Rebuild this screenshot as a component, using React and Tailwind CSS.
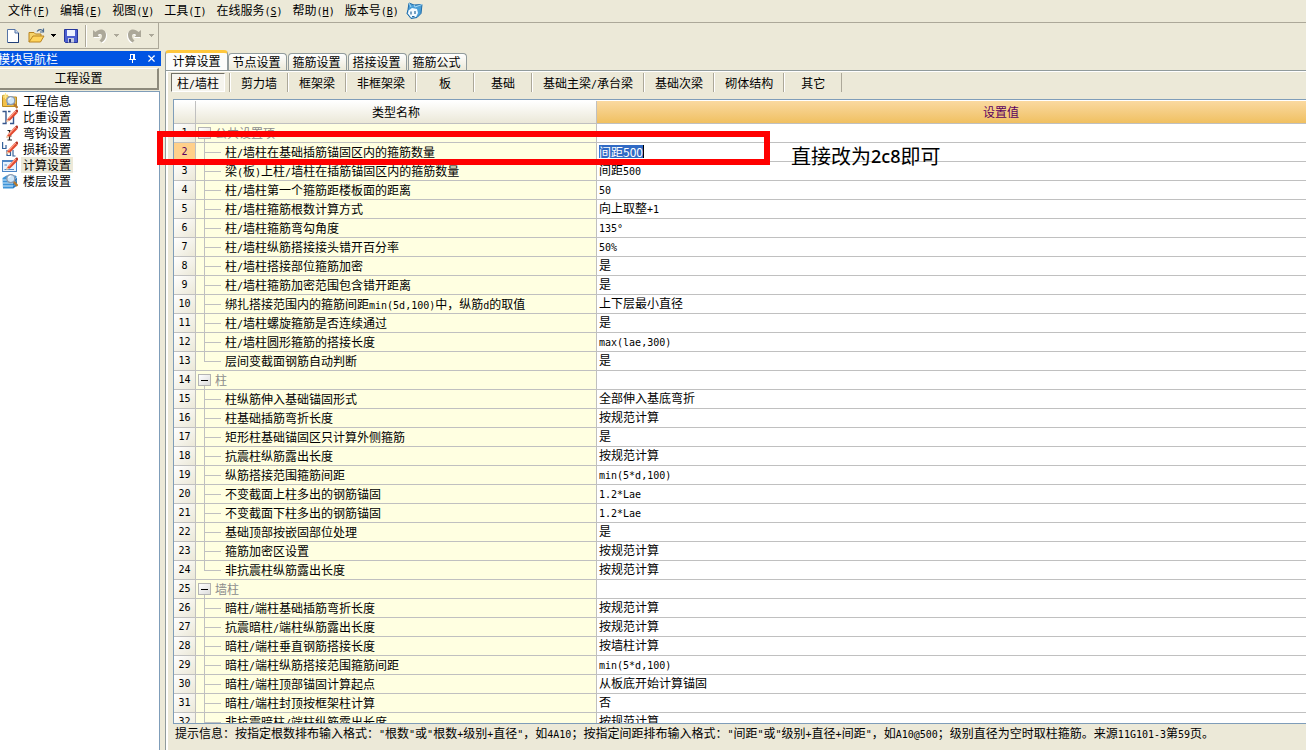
import React from 'react';
import { X } from 'lucide-react';

const menus = [
  { text: '文件', hot: 'F' },
  { text: '编辑', hot: 'E' },
  { text: '视图', hot: 'V' },
  { text: '工具', hot: 'T' },
  { text: '在线服务', hot: 'S' },
  { text: '帮助', hot: 'H' },
  { text: '版本号', hot: 'B' },
];

const tabs = ['计算设置', '节点设置', '箍筋设置', '搭接设置', '箍筋公式'];

const members = ['柱/墙柱', '剪力墙', '框架梁', '非框架梁', '板', '基础', '基础主梁/承台梁', '基础次梁', '砌体结构', '其它'];

const rows = [
  { group: '公共设置项' },
  { label: '柱/墙柱在基础插筋锚固区内的箍筋数量', value: '间距500', editing: true },
  { label: '梁(板)上柱/墙柱在插筋锚固区内的箍筋数量', value: '间距500' },
  { label: '柱/墙柱第一个箍筋距楼板面的距离', value: '50' },
  { label: '柱/墙柱箍筋根数计算方式', value: '向上取整+1' },
  { label: '柱/墙柱箍筋弯勾角度', value: '135°' },
  { label: '柱/墙柱纵筋搭接接头错开百分率', value: '50%' },
  { label: '柱/墙柱搭接部位箍筋加密', value: '是' },
  { label: '柱/墙柱箍筋加密范围包含错开距离', value: '是' },
  { label: '绑扎搭接范围内的箍筋间距min(5d,100)中，纵筋d的取值', value: '上下层最小直径' },
  { label: '柱/墙柱螺旋箍筋是否连续通过', value: '是' },
  { label: '柱/墙柱圆形箍筋的搭接长度', value: 'max(lae,300)' },
  { label: '层间变截面钢筋自动判断', value: '是' },
  { group: '柱' },
  { label: '柱纵筋伸入基础锚固形式', value: '全部伸入基底弯折' },
  { label: '柱基础插筋弯折长度', value: '按规范计算' },
  { label: '矩形柱基础锚固区只计算外侧箍筋', value: '是' },
  { label: '抗震柱纵筋露出长度', value: '按规范计算' },
  { label: '纵筋搭接范围箍筋间距', value: 'min(5*d,100)' },
  { label: '不变截面上柱多出的钢筋锚固', value: '1.2*Lae' },
  { label: '不变截面下柱多出的钢筋锚固', value: '1.2*Lae' },
  { label: '基础顶部按嵌固部位处理', value: '是' },
  { label: '箍筋加密区设置', value: '按规范计算' },
  { label: '非抗震柱纵筋露出长度', value: '按规范计算' },
  { group: '墙柱' },
  { label: '暗柱/端柱基础插筋弯折长度', value: '按规范计算' },
  { label: '抗震暗柱/端柱纵筋露出长度', value: '按规范计算' },
  { label: '暗柱/端柱垂直钢筋搭接长度', value: '按墙柱计算' },
  { label: '暗柱/端柱纵筋搭接范围箍筋间距', value: 'min(5*d,100)' },
  { label: '暗柱/端柱顶部锚固计算起点', value: '从板底开始计算锚固' },
  { label: '暗柱/端柱封顶按框架柱计算', value: '否' },
  { label: '非抗震暗柱/端柱纵筋露出长度', value: '按规范计算' },
];

const hint =
  '提示信息：按指定根数排布输入格式："根数"或"根数+级别+直径"，如4A10；按指定间距排布输入格式："间距"或"级别+直径+间距"，如A10@500；级别直径为空时取柱箍筋。来源11G101-3第59页。';

// Latin runs take half the width of a Chinese character
const Text = ({ children }) =>
  children
    .split(/([\x20-\x7e°]+)/)
    .filter(Boolean)
    .map((run, i) =>
      /^[\x20-\x7e°]/.test(run) ? (
        <span key={i} className="font-['DejaVu_Sans_Mono',monospace] text-[10px] leading-[0px]">{run}</span>
      ) : (
        <React.Fragment key={i}>{run}</React.Fragment>
      )
    );

const Pencil = () => (
  <g>
    <path d="M5 10.5 12.5 2l3 2L8 11.5l-3.4 1z" fill="#e2492f" />
    <path d="M6.5 9.5 13 2.6" stroke="#ffa48c" strokeWidth="1.2" />
    <path d="M4.2 13 5 10.3l2.6 1.6z" fill="#f0c9a0" />
    <path d="M13 1.4 15 .3 16.4 2l-1.2 2z" fill="#b93424" />
  </g>
);

const Magnifier = ({ x = 0, y = 0 }) => (
  <g transform={`translate(${x} ${y})`}>
    <path d="m9.5 8.5 4 4.5" stroke="#b87a2c" strokeWidth="2.4" />
    <circle cx="6.8" cy="5.6" r="4" fill="#cfe6f8" stroke="#8b9bb0" strokeWidth="1.4" />
    <path d="M4.6 5a2.4 2.4 0 0 1 2.6-2" stroke="#fff" strokeWidth="1.2" fill="none" />
  </g>
);

const ProjectIcon = () => (
  <svg viewBox="0 0 16 16" className="h-4 w-4 shrink-0">
    <path d="M.5 2.5h5l1 1.5h8v9.5h-14z" fill="#f2c14a" stroke="#b98a22" />
    <path d="M3.5 0v6M.5 3h6M1.500 1l4 4M5.5 1l-4 4" stroke="#ffe98c" />
    <path d="M5 5h8v7H5z" fill="#5d86b8" />
    <Magnifier x={2} y={2} />
  </svg>
);

const WeightIcon = () => (
  <svg viewBox="0 0 16 16" className="h-4 w-4 shrink-0" fill="none">
    <path d="M.5 2.5H4v12H.5M6 2.5h2.5M9 6.500h2.500v8H8" stroke="#35558c" strokeWidth="1.400" />
    <Pencil />
  </svg>
);

const HookIcon = () => (
  <svg viewBox="0 0 16 16" className="h-4 w-4 shrink-0" fill="none">
    <path d="M5.500 5.500h3M7.500 6v9M5.500 15h4.500M6 11h3.500" stroke="#222" strokeWidth="1.200" />
    <Pencil />
  </svg>
);

const LossIcon = () => (
  <svg viewBox="0 0 16 16" className="h-4 w-4 shrink-0" fill="none">
    <path d="M.6 1v6.500H4V4M5 9v5.500h3.500V9M11 9v6h2.500" stroke="#35629a" strokeWidth="1.200" />
    <Pencil />
  </svg>
);

const CalcIcon = () => (
  <svg viewBox="0 0 16 16" className="h-4 w-4 shrink-0" fill="none">
    <rect x=".5" y="3.500" width="14" height="11" fill="#e7f2fd" stroke="#4c86c6" />
    <path d="M.5 4.500h14" stroke="#4c86c6" />
    <path d="M2.500 8H5M2.500 12.500h9.500" stroke="#4c86c6" />
    <Pencil />
  </svg>
);

const FloorIcon = () => (
  <svg viewBox="0 0 16 16" className="h-4 w-4 shrink-0" fill="none">
    <path d="m.5 5 4-2.500h9L15 4v8.500L11 15.500H1z" fill="#3d93d8" />
    <path d="M.5 7H11l4-2.500M.5 10H11l4-2.500M.5 13H11l4-2.500" stroke="#d3ebfb" />
    <path d="M11 6v9.500L15 12.500V5z" fill="#1c66ad" fillOpacity=".6" />
    <Magnifier x={2} y={0} />
  </svg>
);

const navItems = [
  { text: '工程信息', icon: <ProjectIcon /> },
  { text: '比重设置', icon: <WeightIcon /> },
  { text: '弯钩设置', icon: <HookIcon /> },
  { text: '损耗设置', icon: <LossIcon /> },
  { text: '计算设置', icon: <CalcIcon />, active: true },
  { text: '楼层设置', icon: <FloorIcon /> },
];

const BrandIcon = () => (
  <svg viewBox="0 0 17 17" className="-ml-[3px] h-[17px] w-[17px]">
    <path d="M3 1 8 3l8-.5-1 9-4 4-6 1-4-5 1-4z" fill="#4a9fd8" stroke="#1f6ba8" />
    <path d="m3 1 2 4M8 3l1 2 7-2.500" stroke="#a7d9f4" fill="none" />
    <path d="M2.500 8.500 6 6l5 1 1 4-2 4-5 .5-3-4z" fill="#f3faff" />
    <path d="M5 9.500v3M9 9v3M6 14.500h2.500" stroke="#24679c" strokeWidth="1.200" />
  </svg>
);

const Caret = ({ className }) => (
  <svg viewBox="0 0 5 3" className={`h-[3px] w-[5px] ${className}`} shapeRendering="crispEdges">
    <path d="M0 0h5v1H0zM1 1h3v1H1zM2 2h1v1H2z" fill="currentColor" />
  </svg>
);

const undoShape = 'M0 1v7h6.500L4.800 6C6 4.300 9 4.500 9 7c0 2-1 3-2.500 4.500L8.500 13.500C11.500 11.500 13 9 13 6c0-4-2.500-5.500-5-5.500C6 .5 4 1.500 2.500 3z';

const UndoIcon = ({ className = '' }) => (
  <svg viewBox="0 0 14 14" className={`h-[14px] w-[14px] ${className}`}>
    <path d={undoShape} fill="#fff" transform="translate(1 1)" />
    <path d={undoShape} fill="#aca899" />
  </svg>
);

const Toolbar = () => (
  <div className="flex h-[26px] w-[159px] items-center border-r border-b border-[#aca899] pl-[7px]">
    <button aria-label="新建">
      <svg viewBox="0 0 12 14" className="h-[14px] w-3">
        <path d="M.5.5H8L11.500 4v9.500H.5z" fill="#fff" stroke="#5674a6" />
        <path d="M8 .5V4h3.500" fill="#c8daf2" stroke="#5674a6" />
        <path d="M11.500 4v9.500H1" stroke="#203f78" fill="none" />
      </svg>
    </button>
    <button aria-label="打开" className="ml-[9px] flex items-center gap-[6px]">
      <svg viewBox="0 0 17 16" className="h-4 w-[17px]">
        <path d="M1 14V4.500h5L7.500 6H13v3" fill="#f6d36a" stroke="#b98420" />
        <path d="m1 14 4-6h11l-3.500 6z" fill="#ffd45c" stroke="#b98420" />
        <path d="M9 3.500C11 1 13.500 1 15 3M15.500.5V4H12" fill="none" stroke="#48688f" strokeWidth="1.200" />
      </svg>
      <Caret className="text-black" />
    </button>
    <button aria-label="保存" className="ml-2">
      <svg viewBox="0 0 14 14" className="h-[14px] w-[14px]">
        <path d="M.5.5h13v13h-12l-1-1z" fill="#4c5fd0" stroke="#27369a" />
        <path d="M3 1h8v6H3z" fill="#eef2ff" />
        <path d="M4 9h6v4.500H4z" fill="#c6cbe0" />
        <path d="M5 10h2v3.500H5z" fill="#23307e" />
      </svg>
    </button>
    <span className="ml-[7px] h-[22px] w-[2px] border-l border-r border-l-[#aca899] border-r-white" />
    <button aria-label="撤销" disabled className="ml-[6px] flex items-center gap-[7px]">
      <UndoIcon />
      <Caret className="text-[#aca899]" />
    </button>
    <button aria-label="恢复" disabled className="ml-2 flex items-center gap-2">
      <UndoIcon className="-scale-x-100" />
      <Caret className="text-[#aca899]" />
    </button>
  </div>
);

const Sidebar = () => (
  <aside className="flex w-[161px] shrink-0 flex-col overflow-hidden pt-[2px]">
    <div className="flex h-[15px] items-center justify-between bg-[#0054e3] pr-1 text-white">
      <span className="-ml-[2px] whitespace-nowrap leading-none">模块导航栏</span>
      <span className="flex items-center gap-[9px]">
        <button aria-label="固定">
          <svg viewBox="0 0 9 9" className="h-[9px] w-[9px]" shapeRendering="crispEdges" fill="none" stroke="#fff">
            <path d="M2.500 0v5M2 .5h4M5.500 0v5M6.500 0v5M1 5.500h7M4.500 6v3" />
          </svg>
        </button>
        <button aria-label="关闭">
          <X className="h-[11px] w-[11px]" strokeWidth={2.5} />
        </button>
      </span>
    </div>
    <button className="mt-[2px] h-[22px] w-[159px] shrink-0 border-r-2 border-b-2 border-t border-t-white border-r-[#8d8a7c] border-b-[#8d8a7c] pb-px leading-none">
      工程设置
    </button>
    <ul className="mt-px w-[160px] flex-1 border-t border-r border-[#7f9db9] bg-white pt-px">
      {navItems.map((item) => (
        <li key={item.text}>
          <a href="#" className="flex h-4 items-center gap-[3px] pl-[2px]">
            {item.icon}
            <span className={item.active ? 'bg-[#ece9d8] px-[2px] leading-4' : 'px-[2px] leading-4'}>{item.text}</span>
          </a>
        </li>
      ))}
    </ul>
  </aside>
);

const SettingsTable = () => {
  const cell = 'h-[19px] border-r border-b border-[#c0c0c0] p-0';
  return (
    <table className="w-[1231px] table-fixed border-separate border-spacing-0">
      <colgroup>
        <col className="w-[22px]" />
        <col className="w-[401px]" />
        <col />
      </colgroup>
      <thead>
        <tr className="h-[23px]">
          <th className="border-r border-b border-[#c0c0c0] bg-linear-to-b from-white to-[#ebe8d8] p-0" />
          <th className="border-r border-b border-[#c0c0c0] bg-linear-to-b from-white to-[#ebe8d8] p-0 font-normal">类型名称</th>
          <th className="border-b border-[#c0c0c0] bg-linear-to-b from-[#fad9a0] to-[#f0c060] p-0 font-normal text-[#5a0060]">设置值</th>
        </tr>
      </thead>
      <tbody>
        {rows.map((row, i) => {
          const last = !rows[i + 1] || rows[i + 1].group;
          const bodyEnd = last && i < rows.length - 1;
          return (
            <tr key={i}>
              <td
                className={`${cell} text-center font-['DejaVu_Sans_Mono',monospace] text-[10px] leading-none ${
                  row.editing ? 'bg-[#ffd08a] text-[#5a0060]' : 'bg-linear-to-br from-white to-[#ebe8d8]'
                }`}
              >
                {i + 1}
              </td>
              <td className={`${cell} bg-[#ffffe1]`}>
                {row.group ? (
                  <div className="flex h-[18px] items-center">
                    <span className="ml-[2px] flex w-[13px] flex-col items-center self-stretch pt-[3px]">
                      <button
                        aria-label="折叠"
                        className="flex h-3 w-[13px] shrink-0 items-center justify-center border border-[#b4b4b4] bg-linear-to-br from-white to-[#dcdcdc]"
                      >
                        <span className="h-px w-[7px] bg-black" />
                      </button>
                      <span className="w-px flex-1 bg-[#c0c0c0]" />
                    </span>
                    <span className="ml-1 leading-none text-[#8c8c8c]">{row.group}</span>
                  </div>
                ) : (
                  <div className="flex h-[18px] items-center">
                    {/* tree branch */}
                    <span className="ml-2 flex w-[17px] shrink-0 flex-col self-stretch">
                      <span className="h-[10px] border-b border-l border-[#c0c0c0]" />
                      <span className={bodyEnd ? 'flex-1' : 'flex-1 border-l border-[#c0c0c0]'} />
                    </span>
                    <span className="ml-1 whitespace-nowrap leading-none">
                      <Text>{row.label}</Text>
                    </span>
                  </div>
                )}
              </td>
              <td className={`${cell} bg-white`}>
                <div className="flex h-[18px] items-center pb-[2px] pl-[2px] leading-none">
                  {row.editing ? (
                    <input
                      aria-label={row.label}
                      defaultValue={row.value}
                      className="h-[13px] w-[45px] border-r border-black bg-[#316ac5] p-0 text-xs leading-none text-white outline-none"
                    />
                  ) : (
                    row.value && <span><Text>{row.value}</Text></span>
                  )}
                </div>
              </td>
            </tr>
          );
        })}
      </tbody>
    </table>
  );
};

const App = () => {
  return (
    <div className="relative flex h-screen flex-col overflow-hidden bg-[#ece9d8] font-['Noto_Sans_CJK_SC',sans-serif] text-xs text-black">
      {/* Menu bar */}
      <nav className="flex h-[23px] shrink-0 items-center gap-[10px] border-b border-[#aca899] pb-[2px] pl-2">
        {menus.map((m) => (
          <button key={m.hot} className="whitespace-nowrap leading-none">
            {m.text}
            <span className="font-['DejaVu_Sans_Mono',monospace] text-[10px] leading-[0px]">
              (<u>{m.hot}</u>)
            </span>
          </button>
        ))}
        <BrandIcon />
      </nav>
      <Toolbar />

      <div className="flex min-h-0 flex-1">
        <Sidebar />

        <main className="ml-1 flex min-w-0 flex-1 flex-col pt-px">
          {/* Tabs */}
          <div className="flex h-5 shrink-0 items-end" role="tablist">
            {tabs.map((tab, i) => (
              <button
                key={tab}
                role="tab"
                aria-selected={i === 0}
                className={
                  i === 0
                    ? 'h-5 w-[63px] rounded-t border-x border-t-[3px] border-x-[#919b9c] border-t-[#ffc73c] bg-[#fcfcfa] pb-[2px] leading-none'
                    : 'mr-px h-[17px] w-[59px] rounded-t border-x border-t border-[#919b9c] bg-linear-to-b from-white to-[#ece9d8] pr-[2px] leading-none'
                }
              >
                {tab}
              </button>
            ))}
          </div>

          <div className="flex min-h-0 flex-1 flex-col border-t border-l border-[#919b9c]">
            <div className="flex min-h-0 flex-1 flex-col border-t border-l-2 border-white pl-[5px]">
              {/* Member types */}
              <div className="flex h-[27px] shrink-0 items-start pt-px">
                {members.map((m, i) =>
                  i === 0 ? (
                    <div key={m} className="-ml-[2px] flex border-r border-[#aca899] pr-1">
                      <button className="h-[19px] w-[54px] border border-t-[#716f64] border-l-[#716f64] border-r-white border-b-white bg-[#f6f5ee] leading-none">
                        <Text>{m}</Text>
                      </button>
                    </div>
                  ) : (
                    <button
                      key={m}
                      className="h-[19px] min-w-[58px] border-r border-l border-r-[#aca899] border-l-white px-[10px] whitespace-nowrap leading-none"
                    >
                      <Text>{m}</Text>
                    </button>
                  )
                )}
              </div>

              <div className="min-h-0 flex-1 overflow-hidden border-y border-l border-[#7f9db9] bg-white pt-px">
                <SettingsTable />
              </div>

              <p className="h-[26px] shrink-0 overflow-hidden pt-[3px] pl-[2px] leading-3 whitespace-nowrap">
                <Text>{hint}</Text>
              </p>
            </div>
          </div>
        </main>
      </div>

      {/* Annotation over the grid */}
      <div className="pointer-events-none absolute top-[131px] left-[157px] h-[34px] w-[613px] border-[6px] border-[#ff0000]" />
      <p className="pointer-events-none absolute top-[144px] left-[791px] flex items-center text-xl leading-6">
        直接改为
        <span className="font-['Noto_Sans',sans-serif] text-lg leading-6 font-medium">2c8</span>
        即可
      </p>
    </div>
  );
};

export default App;
